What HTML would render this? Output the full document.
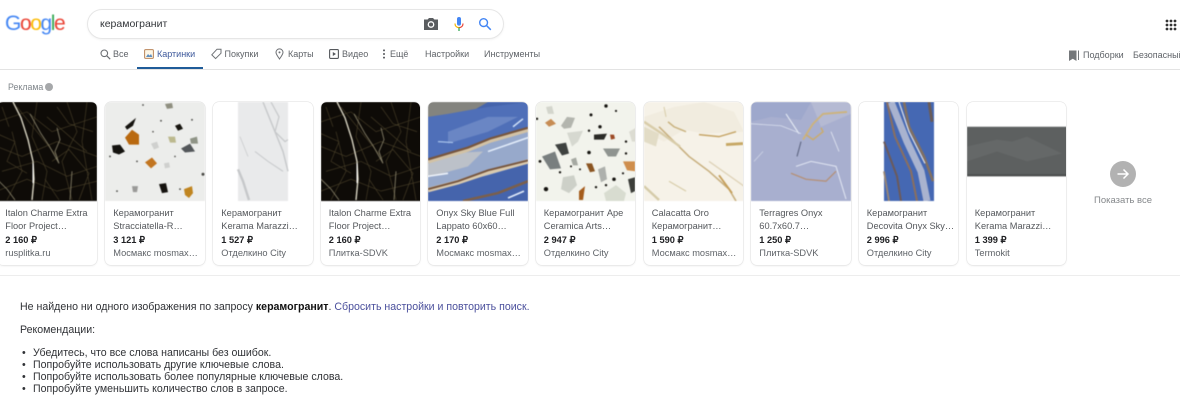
<!DOCTYPE html>
<html lang="ru"><head><meta charset="utf-8"><title>керамогранит</title>
<style>
*{box-sizing:border-box}
html,body{margin:0;padding:0;background:#fff}
body{width:1180px;height:418px;position:relative;overflow:hidden;font-family:"Liberation Sans",Arial,sans-serif;color:#3c4043}
.t{position:absolute;white-space:nowrap;filter:blur(.35px)}
.n{font-size:9px;line-height:12px;top:48px;color:#5f6368}
.card{position:absolute;top:102px;width:99.5px;height:163px;border-radius:6px;background:#fff;box-shadow:0 0 0 .6px #e4e4e4,0 1px 2px rgba(0,0,0,.08);overflow:hidden}
.card svg{position:absolute;left:0;top:0;width:100px;height:99px;display:block;filter:blur(.65px)}
.l{position:absolute;left:8.3px;white-space:nowrap;font-size:9.25px;line-height:13px;color:#55585c;filter:blur(.3px)}
.l1{top:105px}.l2{top:118px}.l3{top:131.5px;font-weight:700;color:#202124}.l4{top:145px;color:#5f6368}
.b{font-size:10.6px;line-height:13px;color:#303236}
svg.i{position:absolute;filter:blur(.3px)}
</style></head><body>

<svg width="0" height="0" style="position:absolute"><defs>
<g id="blk"><rect width="100" height="100" fill="#0e0b07"/>
<g fill="none" stroke="#6a5d3c" stroke-width=".6" opacity=".65"><path d="M0 20 30 10 55 30 100 15M0 45 25 55 60 40 100 55M5 70 40 60 70 75 100 65M0 90 30 78 60 90 100 80M70 0 80 30 65 60 75 99M40 0 35 35 50 70 45 99M90 0 85 40 95 99M15 30 25 70 10 99M50 15 90 50M20 5 60 55M0 32 18 40 10 60 30 72M55 60 72 48 92 72 82 99M60 5 72 22 96 30M48 78 62 99M5 5 12 25"/></g>
<path d="M33 12 44 32 52 44 62 62 M60 26 63 38 58 50 62 62 M0 78 10 88 18 99M75 70 73 99" fill="none" stroke="#958f76" stroke-width=".9" opacity=".85"/>
<path d="M16 0 24 16 31 38 36 60 37 78 35 99" fill="none" stroke="#d8d4c2" stroke-width="1.400"/><path d="M36 62 36 82" fill="none" stroke="#fff" stroke-width="1"/></g>
</defs></svg>

<!-- logo -->
<div class="t" style="left:5px;top:9px;font-size:21px;line-height:30px;letter-spacing:-1.4px;filter:blur(.45px)"><span style="color:#4285f4">G</span><span style="color:#ea4335">o</span><span style="color:#fbbc05">o</span><span style="color:#4285f4">g</span><span style="color:#34a853">l</span><span style="color:#ea4335">e</span></div>

<!-- search box -->
<div style="position:absolute;left:87px;top:9px;width:417px;height:30px;border:1px solid #e6e6e6;border-radius:15px;box-shadow:0 1px 2px rgba(0,0,0,.05)"></div>
<div class="t" style="left:100px;top:17px;font-size:10.5px;line-height:14px;color:#33363a">керамогранит</div>
<svg class="i" style="left:423px;top:17px" width="16" height="14" viewBox="0 0 16 14"><path d="M1 2.5h3.6L6 1h4l1.4 1.5H15V13H1z" fill="#5a5d60"/><circle cx="8" cy="7.500" r="2.700" fill="none" stroke="#fff" stroke-width="1.300"/></svg>
<svg class="i" style="left:453px;top:16px" width="12" height="16" viewBox="0 0 12 16"><rect x="4" y="1" width="4" height="8.6" rx="2" fill="#4285f4"/><path d="M2 7.5C2 10 3.600 11.600 6 11.600" fill="none" stroke="#f4b400" stroke-width="1.200"/><path d="M10 7.500C10 10 8.400 11.600 6 11.600" fill="none" stroke="#ea4335" stroke-width="1.200"/><path d="M6 11.600V15" stroke="#34a853" stroke-width="1.300"/></svg>
<svg class="i" style="left:478px;top:17px" width="14" height="14" viewBox="0 0 14 14"><circle cx="5.600" cy="5.600" r="3.900" fill="none" stroke="#4285f4" stroke-width="1.400"/><path d="M8.600 8.600 12.800 12.800" stroke="#4285f4" stroke-width="1.500"/></svg>
<svg class="i" style="left:1165px;top:19px" width="12" height="12" viewBox="0 0 12 12" fill="#333"><circle cx="2" cy="2" r="1.400"/><circle cx="6" cy="2" r="1.400"/><circle cx="10" cy="2" r="1.400"/><circle cx="2" cy="6" r="1.400"/><circle cx="6" cy="6" r="1.400"/><circle cx="10" cy="6" r="1.400"/><circle cx="2" cy="10" r="1.400"/><circle cx="6" cy="10" r="1.400"/><circle cx="10" cy="10" r="1.400"/></svg>

<!-- nav -->
<svg class="i" style="left:100px;top:49px" width="11" height="11" viewBox="0 0 11 11"><circle cx="4.300" cy="4.300" r="3.300" fill="none" stroke="#6d7074" stroke-width="1.100"/><path d="M6.800 6.800 10.200 10.200" stroke="#6d7074" stroke-width="1.200"/></svg>
<div class="t n" style="left:113px">Все</div>
<svg class="i" style="left:144px;top:49px" width="10" height="10" viewBox="0 0 10 10"><rect x=".6" y=".6" width="8.800" height="8.800" rx="1" fill="#fdf6e6" stroke="#b9855a" stroke-width="1"/><path d="M2 8 4 5 5.600 6.600 7 5 8.400 8z" fill="#5f8fc0"/></svg>
<div class="t n" style="left:157px;color:#3f5a9c">Картинки</div>
<div style="position:absolute;left:137px;top:67px;width:66px;height:2px;background:#1f5c99"></div>
<svg class="i" style="left:211px;top:48px" width="11" height="12" viewBox="0 0 11 12"><path d="M6 1.200H10V5.200L4.600 10.600.8 6.800z" fill="none" stroke="#6d7074" stroke-width="1"/></svg>
<div class="t n" style="left:224.500px">Покупки</div>
<svg class="i" style="left:275px;top:48px" width="9" height="12" viewBox="0 0 9 12"><path d="M4.500 11C2.500 8 1 6.300 1 4.400a3.500 3.500 0 0 1 7 0C8 6.300 6.500 8 4.500 11z" fill="none" stroke="#6d7074" stroke-width="1"/><circle cx="4.500" cy="4.400" r="1" fill="#6d7074"/></svg>
<div class="t n" style="left:288px">Карты</div>
<svg class="i" style="left:329px;top:49px" width="10" height="10" viewBox="0 0 10 10"><rect x=".6" y=".6" width="8.800" height="8.800" rx="1" fill="none" stroke="#55585c" stroke-width="1.100"/><path d="M3.800 3 7 5 3.800 7z" fill="#55585c"/></svg>
<div class="t n" style="left:342px">Видео</div>
<svg class="i" style="left:382px;top:49px" width="4" height="10" viewBox="0 0 4 10" fill="#55585c"><circle cx="2" cy="1.400" r="1"/><circle cx="2" cy="5" r="1"/><circle cx="2" cy="8.600" r="1"/></svg>
<div class="t n" style="left:390px">Ещё</div>
<div class="t n" style="left:425px">Настройки</div>
<div class="t n" style="left:484px">Инструменты</div>
<svg class="i" style="left:1068px;top:49px" width="12" height="13" viewBox="0 0 12 13"><path d="M1 1.500H8.500V12L4.800 9.800 1 12z" fill="#74777a"/><path d="M10.500 1.500V11" stroke="#74777a" stroke-width="1"/></svg>
<div class="t n" style="left:1083px;top:49px">Подборки</div>
<div class="t n" style="left:1133px;top:49px">Безопасный</div>
<div style="position:absolute;left:0;top:69px;width:1180px;height:1px;background:#e3e3e3"></div>

<div class="t" style="left:8px;top:81px;font-size:8.800px;line-height:12px;color:#80868b">Реклама</div>
<div style="position:absolute;left:45px;top:83px;width:8px;height:8px;border-radius:50%;background:#a6a8aa;filter:blur(.3px)"></div>

<!-- card 1 -->
<div class="card" style="left:-3px"><svg viewBox="0 0 100 100" preserveAspectRatio="none"><use href="#blk"/></svg>
<div class="l l1">Italon Charme Extra</div><div class="l l2">Floor Project…</div><div class="l l3">2 160 ₽</div><div class="l l4">rusplitka.ru</div></div>

<!-- card 2 -->
<div class="card" style="left:105px"><svg viewBox="0 0 100 100" preserveAspectRatio="none"><rect width="100" height="100" fill="#ecedeb"/>
<polygon points="20,25 31,16 28,24 22,28" fill="#15130f"/>
<polygon points="20,36 27,28 34,33 34,43 24,43" fill="#b9690f"/>
<polygon points="7,44 15,43 20,50 14,53 8,51" fill="#14130f"/>
<polygon points="40,61 47,56 52,62 46,67" fill="#c27520"/>
<polygon points="54,83 61,82 63,91 57,92" fill="#15130f"/>
<polygon points="79,88 87,85 88,92 84,97 80,94" fill="#c08520"/>
<polygon points="27,85 33,85 32,91 28,91" fill="#9a9a98"/>
<polygon points="70,24 75,22 78,27 73,29" fill="#17150f"/>
<polygon points="63,35 70,35 71,41 65,41" fill="#bcb98e"/>
<polygon points="85,37 92,35 93,42 86,42" fill="#8f9486"/>
<polygon points="76,47 85,42 90,50 80,51" fill="#53575a"/>
<polygon points="46,42 52,40 54,46 49,48" fill="#cfd0ce"/>
<polygon points="59,62 64,61 65,66 60,67" fill="#cfd0ce"/>
<polygon points="60,2 67,1 68,6 62,7" fill="#8f8f80"/>
<g fill="#4a4a46"><circle cx="87" cy="18" r=".9"/><circle cx="56" cy="19" r=".9"/><circle cx="5" cy="55" r=".9"/><circle cx="32" cy="60" r=".9"/><circle cx="98" cy="73" r="1.500"/><circle cx="70" cy="55" r=".8"/><circle cx="12" cy="90" r=".9"/><circle cx="38" cy="3" r=".9"/><circle cx="75" cy="88" r=".9"/><circle cx="48" cy="30" r=".8"/></g></svg>
<div class="l l1">Керамогранит</div><div class="l l2">Stracciatella-R…</div><div class="l l3">3 121 ₽</div><div class="l l4">Мосмакс mosmax…</div></div>

<!-- card 3 -->
<div class="card" style="left:213px"><svg viewBox="0 0 100 100" preserveAspectRatio="none"><rect x="25" width="50" height="100" fill="#e9eaeb"/>
<g fill="none" stroke="#c6c8ca"><path d="M50 0 56 15 62 30 70 50 75 70" stroke-width="1.400"/><path d="M58 0 66 15 62 30 72 40 75 38" stroke-width="1.200"/><path d="M42 50 55 60 70 70" stroke-width="1"/><path d="M25 68 30 80 36 99" stroke-width="2.400"/><path d="M27 35 35 55" stroke-width=".7"/></g></svg>
<div class="l l1">Керамогранит</div><div class="l l2">Kerama Marazzi…</div><div class="l l3">1 527 ₽</div><div class="l l4">Отделкино City</div></div>

<!-- card 4 -->
<div class="card" style="left:320.500px"><svg viewBox="0 0 100 100" preserveAspectRatio="none"><use href="#blk"/></svg>
<div class="l l1">Italon Charme Extra</div><div class="l l2">Floor Project…</div><div class="l l3">2 160 ₽</div><div class="l l4">Плитка-SDVK</div></div>

<!-- card 5 -->
<div class="card" style="left:428px"><svg viewBox="0 0 100 100" preserveAspectRatio="none"><rect width="100" height="100" fill="#4564ac"/>
<path d="M0 15 60 5 100 0V27L0 58z" fill="#4f6fb8"/>
<path d="M20 30 60 15 90 15 60 30 20 42z" fill="#6a86c4"/>
<path d="M0 58 40 47 62 38 100 28V62L60 74 0 88z" fill="#97a9cb"/>
<path d="M0 62 35 51 55 50 40 65 0 76z" fill="#bcc1c9"/>
<path d="M60 50 100 36" stroke="#e2ecfa" stroke-width="1.600" fill="none"/>
<path d="M0 75 20 72" stroke="#eef3fa" stroke-width="1.600" fill="none"/>
<path d="M85 25 95 17" stroke="#cfe0f7" stroke-width="1.500" fill="none"/>
<path d="M10 40 25 41" stroke="#a9c4ec" stroke-width="1.200" fill="none"/>
<path d="M0 0H60L48 7 20 12 0 15z" fill="#84847f"/>
<path d="M0 60 40 48 62 39 100 28" fill="none" stroke="#d2c2a6" stroke-width="4.500"/>
<path d="M0 58 40 46 62 37 100 26" fill="none" stroke="#77563f" stroke-width="2.200"/>
<path d="M0 89 30 81 60 71 100 60" fill="none" stroke="#d9caaf" stroke-width="4.500"/>
<path d="M0 88 30 80 60 69 100 59" fill="none" stroke="#77563f" stroke-width="2"/>
<path d="M35 100 70 92 100 80" fill="none" stroke="#7b5f4b" stroke-width="2.600"/>
<path d="M80 97 96 90" stroke="#e2ecfa" stroke-width="1.600" fill="none"/></svg>
<div class="l l1">Onyx Sky Blue Full</div><div class="l l2">Lappato 60x60…</div><div class="l l3">2 170 ₽</div><div class="l l4">Мосмакс mosmax…</div></div>

<!-- card 6 -->
<div class="card" style="left:535.500px"><svg viewBox="0 0 100 100" preserveAspectRatio="none"><rect width="100" height="100" fill="#f2f3ec"/>
<polygon points="25,24 31,15 39,16 35,26 28,27" fill="#b3b5ae"/>
<polygon points="9,21 15,17 20,22 13,25" fill="#c78c54"/>
<polygon points="31,31 47,29 42,40 36,45" fill="#d6d8d0"/>
<polygon points="19,43 30,41 33,52 26,54" fill="#3f4240"/>
<polygon points="58,33 71,32 68,38 58,38" fill="#2a2a26"/>
<polygon points="74,33 78,33 79,37 75,38" fill="#9d4a25"/>
<polygon points="67,47 84,47 80,55 72,55" fill="#8f9490"/>
<polygon points="6,55 19,50 25,67 14,68" fill="#797f7f"/>
<polygon points="50,62 56,62 59,70 54,71" fill="#8b5522"/>
<polygon points="87,60 99,60 99,70 91,69" fill="#cf8e4d"/>
<polygon points="62,68 69,65 71,78 65,81" fill="#adb0ac"/>
<polygon points="27,76 38,74 41,84 33,92 25,88" fill="#cdd0c8"/>
<polygon points="92,78 99,76 99,90 95,92" fill="#3c3e3a"/>
<polygon points="43,90 49,85 47,99 43,99" fill="#a55c1c"/>
<polygon points="68,92 80,84 90,92 88,100 70,100" fill="#d8dcd0"/>
<polygon points="35,58 40,56 42,64 37,64" fill="#a6a9a2"/>
<polygon points="10,5 16,4 18,12 12,12" fill="#d3d5cc"/>
<polygon points="93,30 100,26 100,40 96,40" fill="#dcdcd2"/>
<g fill="#15130f"><circle cx="55" cy="13" r="1.500"/><circle cx="70" cy="4" r="1.700"/><circle cx="80" cy="9" r="1.100"/><circle cx="1" cy="17" r="1.200"/><circle cx="64" cy="25" r="1.700"/><circle cx="53" cy="29" r="1.200"/><circle cx="90" cy="40" r="1.200"/><circle cx="53" cy="51" r="1.800"/><circle cx="4" cy="60" r="1.400"/><circle cx="24" cy="71" r="1.200"/><circle cx="78" cy="78" r="1.800"/><circle cx="70" cy="84" r="1.200"/><circle cx="60" cy="86" r="1.200"/><circle cx="10" cy="88" r="2.200"/><circle cx="35" cy="65" r="1"/><circle cx="44" cy="68" r="1"/><circle cx="90" cy="52" r="1.200"/><circle cx="87" cy="72" r="1.100"/></g></svg>
<div class="l l1">Керамогранит Ape</div><div class="l l2">Ceramica Arts…</div><div class="l l3">2 947 ₽</div><div class="l l4">Отделкино City</div></div>

<!-- card 7 -->
<div class="card" style="left:643.500px"><svg viewBox="0 0 100 100" preserveAspectRatio="none"><rect width="100" height="100" fill="#f6f2e8"/>
<path d="M0 15 30 5 60 0 90 10 100 30 60 32 40 28 20 40 0 30z" fill="#f1ecdf"/>
<path d="M0 25 15 32 12 45 0 40z" fill="#e2dcc6"/>
<g fill="none"><path d="M15 25 30 40 45 55 65 70 85 88 92 100" stroke="#c8b07f" stroke-width="1.600"/><path d="M0 20 18 32 36 45" stroke="#d8cca9" stroke-width="2.400"/><path d="M24 20 30 25 42 30" stroke="#c9b27e" stroke-width="1.500"/><path d="M55 33 75 35 92 30" stroke="#c6a566" stroke-width="1.500"/><path d="M82 43 99 42" stroke="#c7a865" stroke-width="3"/><path d="M65 60 100 85" stroke="#ddd1b5" stroke-width="1.300"/><path d="M0 85 15 99" stroke="#d5cba9" stroke-width="2.400"/><path d="M25 80 42 90" stroke="#d8cda9" stroke-width="1.200"/><path d="M75 74 88 92" stroke="#c59f5a" stroke-width="1.800"/><path d="M20 5 22 15" stroke="#d8cda9" stroke-width="1"/></g></svg>
<div class="l l1">Calacatta Oro</div><div class="l l2">Керамогранит…</div><div class="l l3">1 590 ₽</div><div class="l l4">Мосмакс mosmax…</div></div>

<!-- card 8 -->
<div class="card" style="left:751px"><svg viewBox="0 0 100 100" preserveAspectRatio="none"><rect width="100" height="100" fill="#a8afcf"/>
<path d="M0 0H60L50 18 20 15 0 20z" fill="#9ea8cc"/>
<path d="M60 0H100V12L70 25z" fill="#b5bad3"/>
<g fill="none"><path d="M52 38 62 22 72 12 96 10" stroke="#cdb37c" stroke-width="1.900"/><path d="M55 33 62 38 72 30 70 26" stroke="#c9ac72" stroke-width="1.600"/><path d="M35 12 48 32" stroke="#e6ecf5" stroke-width="1.100"/><path d="M0 22 30 24 50 32" stroke="#d9dfee" stroke-width=".8"/><path d="M50 40 46 55" stroke="#5e6682" stroke-width="1.100"/><path d="M40 72 55 78 75 80 85 70" stroke="#b59077" stroke-width="1.300"/><path d="M45 65 60 60 85 65 95 98" stroke="#dfe4f1" stroke-width="1.100"/><path d="M80 30 88 50" stroke="#e2e7f2" stroke-width=".8"/><path d="M3 60 12 50" stroke="#cfd5e6" stroke-width=".8"/></g></svg>
<div class="l l1">Terragres Onyx</div><div class="l l2">60.7x60.7…</div><div class="l l3">1 250 ₽</div><div class="l l4">Плитка-SDVK</div></div>

<!-- card 9 -->
<div class="card" style="left:858.500px"><svg viewBox="0 0 100 100" preserveAspectRatio="none"><rect x="25" width="50" height="100" fill="#4568b3"/>
<g fill="none"><path d="M32 0 48 40 62 70 68 100" stroke="#a9b3cf" stroke-width="7"/><path d="M45 0 50 25 65 55 74 80" stroke="#83705f" stroke-width="2.500"/><path d="M28 0 36 35 52 70 58 100" stroke="#8b6f5e" stroke-width="2"/><path d="M25 40 38 75 42 100" stroke="#6c5a5a" stroke-width="2"/><path d="M25 70 30 100" stroke="#9a8672" stroke-width="1.800"/><path d="M40 0 50 30 66 62" stroke="#e0e3ea" stroke-width="1.200"/><path d="M70 0 73 20" stroke="#6a5c58" stroke-width="3"/></g></svg>
<div class="l l1">Керамогранит</div><div class="l l2">Decovita Onyx Sky…</div><div class="l l3">2 996 ₽</div><div class="l l4">Отделкино City</div></div>

<!-- card 10 -->
<div class="card" style="left:966.500px"><svg viewBox="0 0 100 100" preserveAspectRatio="none"><rect y="25" width="100" height="50" fill="#5d6060"/><path d="M0 45 30 38 45 40 60 35 95 52 60 60 30 50 0 60z" fill="#656868"/><path d="M0 73H100V75H0z" fill="#4b4d4d"/></svg>
<div class="l l1">Керамогранит</div><div class="l l2">Kerama Marazzi…</div><div class="l l3">1 399 ₽</div><div class="l l4">Termokit</div></div>

<!-- show all -->
<svg class="i" style="left:1110px;top:161px" width="26" height="26" viewBox="0 0 26 26"><circle cx="13" cy="13" r="13" fill="#b2b2b2"/><path d="M7.500 13H18M13.500 8.500 18 13l-4.500 4.500" fill="none" stroke="#fff" stroke-width="1.500"/></svg>
<div class="t" style="left:1094px;top:194px;font-size:9.500px;line-height:13px;color:#85888b">Показать все</div>

<div style="position:absolute;left:0;top:275px;width:1180px;height:1px;background:#ededed"></div>

<!-- message -->
<div class="t b" style="left:20px;top:301px">Не найдено ни одного изображения по запросу <b style="color:#111">керамогранит</b>. <span style="color:#4a4f9c">Сбросить настройки и повторить поиск.</span></div>
<div class="t b" style="left:20px;top:324px">Рекомендации:</div>
<div class="t b" style="left:22px;top:347px;line-height:12.100px">•<br>•<br>•<br>•</div>
<div class="t b" style="left:33px;top:347px;line-height:12.100px">Убедитесь, что все слова написаны без ошибок.<br>Попробуйте использовать другие ключевые слова.<br>Попробуйте использовать более популярные ключевые слова.<br>Попробуйте уменьшить количество слов в запросе.</div>
</body></html>
